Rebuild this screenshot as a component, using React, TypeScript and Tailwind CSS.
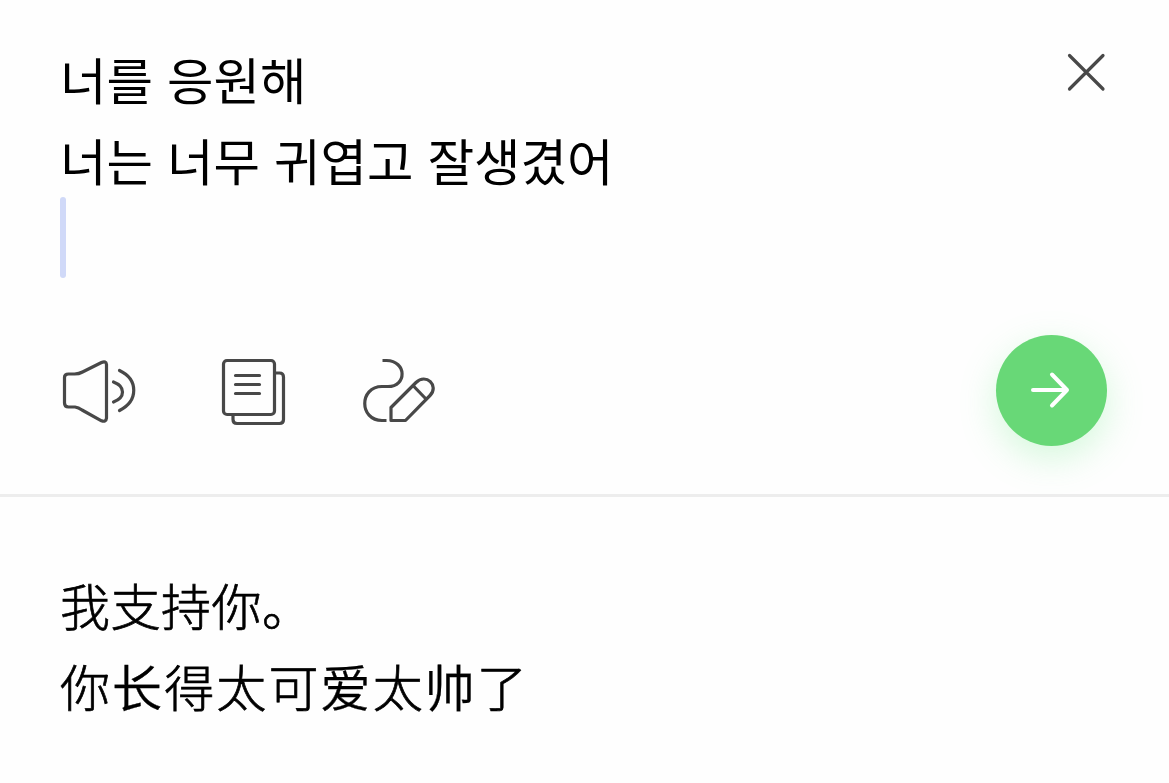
import React from 'react';

const SpeakerIcon = () => (
  <svg width="76" height="68" viewBox="0 0 76 68" fill="none" stroke="#484848" strokeWidth="3.2" strokeLinecap="round" strokeLinejoin="round">
    <path d="M4.5 20.5C4.5 18 6 17 8.5 17H14.5Q19 17 22.5 15L41.500 5.500Q46 3.500 46.500 7.500V61Q46 65.500 41.500 63.800L22 53Q18.500 50.500 15 50H8.500Q4.500 50 4.500 46Z" />
    <path d="M53.5 25C65.5 29.5 65.5 40.5 53.5 45" />
    <path d="M59.5 13.5C78.5 22.5 78.5 44 59.5 53.5" />
  </svg>
);

const PagesIcon = () => (
  <svg width="68" height="70" viewBox="0 0 68 70" fill="none" stroke="#484848" strokeWidth="3.2" strokeLinecap="round" strokeLinejoin="round">
    <rect x="3.5" y="4.5" width="51" height="54" rx="3.5" />
    <path d="M56 17H59.5Q63.5 17 63.5 21V63.5Q63.5 67.5 59.5 67.5H17Q13 67.5 13 63.5V60" />
    <path d="M15.5 19.500H39.5M15.5 28.500H39.5M15.5 37.500H39.5" />
  </svg>
);

const HandwritingIcon = () => (
  <svg width="76" height="68" viewBox="0 0 76 68" fill="none" stroke="#484848" strokeWidth="3.2" strokeLinejoin="round">
    <path d="M22.5 3.5H26.5C47 4 47 29.5 28 29.5H22C-1 29.5 -1 63.5 22 63.5H26.5" />
    <path d="M31 63.5V50.5L56 25.5C66 15.5 79.5 29 70 38.5L45.5 63.5Z" />
    <path d="M53 28.5L66 42" />
  </svg>
);

const CloseIcon = () => (
  <svg width="40" height="40" viewBox="0 0 40 40" fill="none" stroke="#484848" strokeWidth="3.2" strokeLinecap="round">
    <path d="M2.5 3.500L36 37M36 3.500L2.5 37" />
  </svg>
);

const ArrowIcon = () => (
  <svg width="42" height="40" viewBox="0 0 42 40" fill="none" stroke="#fff" strokeWidth="4" strokeLinecap="round" strokeLinejoin="round">
    <path d="M2 19H36M21 3.5L36 19L21 34.5" />
  </svg>
);

export default function App() {
  return (
    <main className="flex h-[783px] w-full flex-col overflow-hidden bg-[#fefefe] text-black">
      <section className="flex h-[497px] flex-col border-b-3 border-[#ededed] pl-[60px] pr-[62px]">
        <div className="flex items-start justify-between pt-[35px]">
          <div lang="ko" className="whitespace-nowrap pt-[3px] font-['Noto_Sans_CJK_KR',sans-serif] text-[50.5px] leading-[81px]">
            <p>너를 응원해</p>
            <p>너는 너무 귀엽고 잘생겼어</p>
            <div className="-mt-[3px] h-[81px] w-1.5 rounded-full bg-[#d0d9f8]" />
          </div>
          <button type="button" aria-label="Clear" className="mt-[17px]">
            <CloseIcon />
          </button>
        </div>
        <div className="mt-[57px] flex h-[111px] items-center justify-between">
          <div className="flex items-center">
            <button type="button" aria-label="Listen">
              <SpeakerIcon />
            </button>
            <button type="button" aria-label="Copy" className="ml-[84px]">
              <PagesIcon />
            </button>
            <button type="button" aria-label="Handwriting" className="ml-[72px]">
              <HandwritingIcon />
            </button>
          </div>
          <button
            type="button"
            aria-label="Translate"
            className="flex size-[111px] items-center justify-center rounded-full bg-[#68d877] shadow-[0_12px_36px_rgba(104,232,130,0.28)]"
          >
            <ArrowIcon />
          </button>
        </div>
      </section>

      <section lang="zh-CN" className="whitespace-nowrap pl-[60px] pt-[67px] font-['Noto_Sans_CJK_SC',sans-serif] text-[50px] font-light leading-[81px] [-webkit-text-stroke:0.7px_black]">
        <p className="tracking-[0.5px]">我支持你。</p>
        <p className="tracking-[2.1px]">
          你<span className="font-[350] [-webkit-text-stroke:0.4px_black]">长</span>得太可
          <span className="font-[350] [-webkit-text-stroke:0.4px_black]">爱</span>太
          <span className="font-[350] [-webkit-text-stroke:0.3px_black]">帅</span>了
        </p>
      </section>
    </main>
  );
}
